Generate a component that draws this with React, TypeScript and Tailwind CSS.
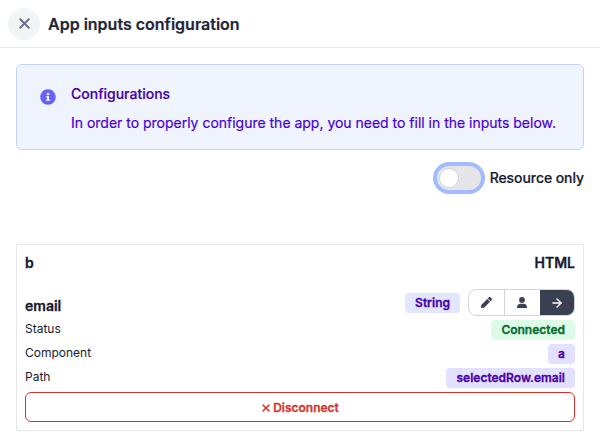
import React from "react";
import { ArrowRight, X } from "lucide-react";
import { FaPen, FaInfoCircle } from "react-icons/fa";

function Badge({ className, children }: { className: string; children: React.ReactNode }) {
  return (
    <span className={`flex h-5 items-center rounded px-2.5 text-xs font-semibold [-webkit-text-stroke:0.3px] ${className}`}>{children}</span>
  );
}

function Row({ label, children }: { label: string; children: React.ReactNode }) {
  return (
    <div className="flex h-5 items-start justify-between">
      <span className="text-xs leading-[18px]">{label}</span>
      {children}
    </div>
  );
}

function PersonIcon() {
  return (
    <svg width="10" height="11" viewBox="0 0 10 11" fill="currentColor" aria-hidden="true">
      <circle cx="5" cy="2.9" r="2.9" />
      <path d="M0 11v-.8C0 8.2 1.5 6.8 3.4 6.8h3.2c1.9 0 3.4 1.4 3.4 3.4v.8z" />
    </svg>
  );
}

export default function App() {
  return (
    <div className="h-[447px] w-[600px] overflow-hidden bg-white font-['Inter',sans-serif] text-[#171a30]">
      <header className="flex h-12 items-center gap-2 border-b border-[#e5e7eb] px-2">
        <button className="flex size-8 items-center justify-center rounded-full bg-[#f3f4f6] text-[#6d7085]">
          <X size={17} strokeWidth={2.8} />
        </button>
        <h1 className="text-base font-semibold text-[#202639] [-webkit-text-stroke:0.2px]">App inputs configuration</h1>
      </header>
      <main className="px-4 pt-4">
        <section className="flex h-[86px] rounded-md border border-[#c3d3fe] bg-[#eff4ff] pl-[23px]">
          <FaInfoCircle size={16} className="mt-6 text-[#6762fa]" />
          <div className="ml-[15px] pt-[19px] text-sm [-webkit-text-stroke:0.2px]">
            <h2 className="font-medium leading-5 text-[#4500a8]">Configurations</h2>
            <p className="mt-[9px] leading-5 tracking-[-0.01px] text-[#4b00d1]">
              In order to properly configure the app, you need to fill in the inputs below.
            </p>
          </div>
        </section>
        <div className="mt-4 flex items-center justify-end gap-[9px]">
          <div className="flex h-6 w-11 items-center rounded-full bg-[#e5e5ea] pl-0.5 ring-4 ring-[#a2bbff]">
            <div className="size-5 rounded-full border border-[#d2d3da] bg-white" />
          </div>
          <span className="text-sm font-medium leading-6 tracking-[-0.07px] [-webkit-text-stroke:0.2px]">Resource only</span>
        </div>
        <section className="mt-[54px] h-[187px] border border-[#e5e7eb] p-2">
          <div className="flex justify-between text-sm font-semibold leading-5 [-webkit-text-stroke:0.3px]">
            <h2>b</h2>
            <span>HTML</span>
          </div>
          <div className="mt-4 flex h-[27px] items-end justify-between">
            <h3 className="text-sm font-semibold leading-5 [-webkit-text-stroke:0.3px]">email</h3>
            <div className="flex items-center gap-2">
              <Badge className="bg-[#e0e7ff] text-[#4500ae]">String</Badge>
              <div className="flex h-[27px] w-[107px] overflow-hidden rounded-lg border border-[#d1d5db] text-[#3b4054]">
                <span className="flex w-9 items-center justify-center border-r border-[#d1d5db]"><FaPen size={11} /></span>
                <span className="flex w-[35px] items-center justify-center pr-px"><PersonIcon /></span>
                <span className="flex flex-1 items-center justify-center bg-[#3b3f52] text-white"><ArrowRight size={14} strokeWidth={2.4} /></span>
              </div>
            </div>
          </div>
          <div className="mt-1 flex flex-col gap-1">
            <Row label="Status"><Badge className="bg-[#dcfce7] text-[#076a2f]">Connected</Badge></Row>
            <Row label="Component"><Badge className="bg-[#e2e1ff] text-[#4b00a5]">a</Badge></Row>
            <Row label="Path"><Badge className="bg-[#e2e1ff] text-[#4b00a5]">selectedRow.email</Badge></Row>
          </div>
          <button className="mt-1 flex h-[30px] w-full items-center justify-center gap-px rounded-md border border-[#dc2f2b] pr-px pt-px text-xs font-semibold text-[#d7352f] [-webkit-text-stroke:0.3px]">
            <X size={12} strokeWidth={3.2} />
            Disconnect
          </button>
        </section>
      </main>
    </div>
  );
}
